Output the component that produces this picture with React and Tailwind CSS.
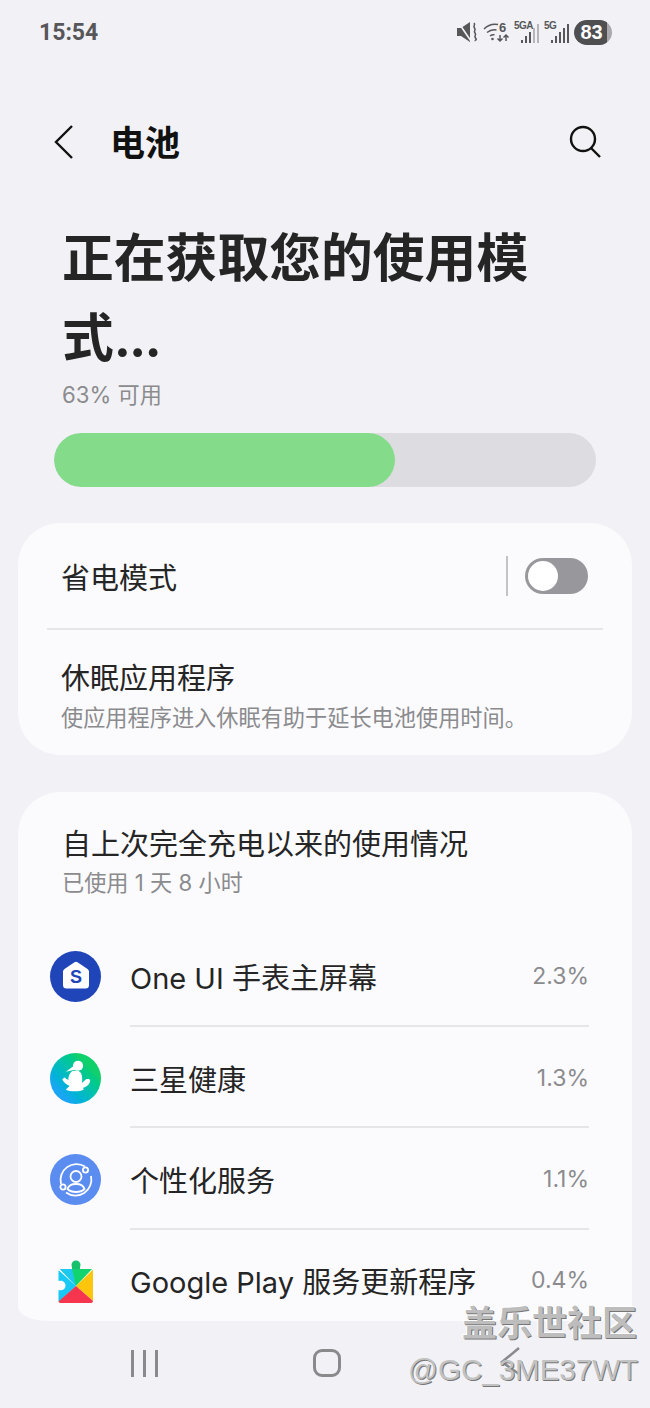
const FF = { fontFamily: 'Inter, "Noto Sans CJK SC", "Noto Sans", sans-serif' };

function StatusIcons() {
  return (
    <div className="flex items-center gap-[4px]">
      <svg width="22" height="24" viewBox="0 0 22 24" className="text-[#57575a]">
        <path d="M0 8h4l9-6v20l-9-6H0z" fill="currentColor" />
        <path d="M1 2l13 19" stroke="#f2f2f6" strokeWidth="1.600" />
        <path d="M17 3c2 2-1.500 3 .500 5s-1.500 3 .500 5-1.500 3 .500 5-1 2 0 3" stroke="currentColor" strokeWidth="1.600" fill="none" />
      </svg>
      <svg width="27" height="24" viewBox="0 0 27 24" fill="none" stroke="#57575a" strokeWidth="1.500">
        <path d="M1 9c4-4 9-5.500 14-4.500M4 12.500c3-2.500 6-3.200 9.500-2.500M7 16c1.500-1.200 3-1.500 4.500-1.200" />
        <circle cx="9.500" cy="19" r="1.300" fill="#57575a" stroke="none" />
        <path d="M17 21v-6M14.500 18.500l2.500 2.500 2.500-2.500M23 21v-6M20.500 17.500l2.500-2.500 2.500 2.500" />
        <text x="16" y="12" fontSize="13" fontWeight="700" fill="#57575a" stroke="none" style={{ fontFamily: '"Liberation Sans", sans-serif' }}>6</text>
      </svg>
      <div className="relative h-[24px] w-[26px]">
        <span className="absolute left-0 top-0 text-[10px] leading-[11px] font-bold tracking-[-0.5px] text-[#57575a]" style={{ fontFamily: '"Liberation Sans", sans-serif' }}>5GA</span>
        <div className="absolute bottom-[1px] left-[7px] flex items-end gap-[2px]">
          <span className="h-[3px] w-[2px] bg-[#57575a]" />
          <span className="h-[7px] w-[2px] bg-[#57575a]" />
          <span className="h-[11px] w-[2px] bg-[#57575a]" />
          <span className="h-[15px] w-[2px] bg-[#b5b5b9]" />
          <span className="h-[19px] w-[2px] bg-[#b5b5b9]" />
        </div>
      </div>
      <div className="relative h-[24px] w-[26px]">
        <span className="absolute left-0 top-0 text-[10px] leading-[11px] font-bold tracking-[-0.5px] text-[#57575a]" style={{ fontFamily: '"Liberation Sans", sans-serif' }}>5G</span>
        <div className="absolute bottom-[1px] left-[7px] flex items-end gap-[2px]">
          <span className="h-[3px] w-[2px] bg-[#57575a]" />
          <span className="h-[7px] w-[2px] bg-[#57575a]" />
          <span className="h-[11px] w-[2px] bg-[#57575a]" />
          <span className="h-[15px] w-[2px] bg-[#57575a]" />
          <span className="h-[19px] w-[2px] bg-[#57575a]" />
        </div>
      </div>
      <div className="relative flex h-[25px] w-[38px] items-center overflow-hidden rounded-full bg-[#a9a9ad]">
        <div className="flex h-full w-[33px] items-center justify-center rounded-l-full bg-[#4f4f52] pl-[2px] text-[20px] font-bold text-white" style={{ fontFamily: '"Liberation Sans", sans-serif' }}>83</div>
      </div>
    </div>
  );
}

function HomeIcon() {
  return (
    <div className="flex h-[51px] w-[51px] items-center justify-center rounded-full bg-[#1f45b8] pb-[3px]">
      <svg width="26" height="28" viewBox="0 0 26 28">
        <path d="M0 10.500Q0 9 1.500 8L11.500 1.200Q13 .300 14.500 1.200L24.500 8Q26 9 26 10.500V24a3.500 3.500 0 0 1-3.500 3.500H3.500A3.500 3.500 0 0 1 0 24z" fill="#fff" />
        <text x="13" y="22" textAnchor="middle" fontSize="18" fontWeight="800" fill="#1f45b8" style={{ fontFamily: '"Liberation Sans", sans-serif' }}>S</text>
      </svg>
    </div>
  );
}

function HealthIcon() {
  return (
    <div className="flex h-[51px] w-[51px] items-center justify-center rounded-full bg-gradient-to-tr from-[#1aa5f5] from-20% to-[#10d06c] to-75%">
      <svg width="51" height="51" viewBox="-25 -25 50 50" fill="#fff">
        <circle cx="2.500" cy="-12.500" r="5" />
        <path d="M-1.500-12.500-9.500-6.500-.500-8.500z" />
        <path d="M-3.500-7C0-8.500 4-8.500 5.500-5 7-2 6.500 1 6.500 4.500L10.500 .500 13.500 .500 14.500 2.500C13 7 10 8.500 7.500 9L8 11C3 13-5 13-9.500 11-8 9-6.500 8.500-6 7-9 6-11 4.500-13 1L-11-1-7 1.500C-7-2-6-5-3.500-7Z" />
      </svg>
    </div>
  );
}

function PersonIcon() {
  return (
    <div className="flex h-[51px] w-[51px] items-center justify-center rounded-full bg-[#5b8cf0]">
      <svg width="36" height="36" viewBox="0 0 36 36" fill="none" stroke="#fff" strokeWidth="1.800">
        <path d="M27 4.500A16 16 0 0 0 3 22" />
        <path d="M33 14A16 16 0 0 1 8 30.500" />
        <circle cx="27.500" cy="8" r="2.600" />
        <circle cx="5" cy="25" r="2.600" />
        <circle cx="18" cy="14.500" r="5.500" />
        <path d="M9.500 27c1-3.500 4.500-5 8.500-5s7.500 1.500 8.500 5c-2 2-5 3-8.500 3s-6.500-1-8.500-3z" />
      </svg>
    </div>
  );
}

function PlayIcon() {
  return (
    <div className="flex h-[51px] w-[51px] items-center justify-center">
      <svg width="36" height="44" viewBox="0 0 36 44">
        <circle cx="18" cy="6" r="4.500" fill="#15c26b" />
        <path d="M14 8h8v3h-8z" fill="#15c26b" />
        <path d="M2 10h32L18 27z" fill="#12d46f" />
        <path d="M2 10h12l4 17L2 10z" fill="#1cc8f0" />
        <path d="M1 11.500 18 27 1 43c-.500-.500-.500-1-.500-2V31c4 1 7-1 7-4.500S4 21 .500 22V12c0-.200.200-.300.500-.500z" fill="#18c9f5" />
        <path d="M34.500 11c.500 0 .500.500.500 1v30L18 27z" fill="#fdc60c" />
        <path d="M18 27 35 42c0 1-1 2-2 2H3c-1 0-2-.500-2.500-1.500z" fill="#f5364e" />
      </svg>
    </div>
  );
}

const apps = [
  { icon: <HomeIcon />, name: "One UI 手表主屏幕", pct: "2.3%" },
  { icon: <HealthIcon />, name: "三星健康", pct: "1.3%" },
  { icon: <PersonIcon />, name: "个性化服务", pct: "1.1%" },
  { icon: <PlayIcon />, name: "Google Play 服务更新程序", pct: "0.4%" },
];

export default function App() {
  return (
    <div className="relative flex h-[1408px] w-[650px] flex-col overflow-hidden bg-[#f2f2f6] text-[#252525]" style={FF}>
      {/* status bar */}
      <div className="flex h-[64px] items-center justify-between pl-[39px] pr-[38px]">
        <span className="pt-[2px] text-[23px] font-bold text-[#57575a]" style={{ fontFamily: 'Roboto, sans-serif' }}>15:54</span>
        <StatusIcons />
      </div>

      {/* header */}
      <div className="mt-[46px] flex h-[64px] items-center justify-between pl-[52px] pr-[48px]">
        <div className="flex items-center gap-[34px]">
          <svg width="24" height="36" viewBox="0 0 24 36" fill="none" stroke="#111" strokeWidth="2.400">
            <path d="M20 2 4 18l16 16" />
          </svg>
          <span className="pt-[2px] text-[35px] font-bold text-[#111]">电池</span>
        </div>
        <svg width="34" height="34" viewBox="0 0 34 34" fill="none" stroke="#111" strokeWidth="2.400">
          <circle cx="15" cy="14" r="12" />
          <path d="m23 23 9 9" />
        </svg>
      </div>

      {/* headline */}
      <h1 className="ml-[62px] mt-[44px] w-[500px] text-[51.800px] leading-[80px] font-bold text-[#252525]">正在获取您的使用模式<span className="tracking-[-2px]">...</span></h1>
      <p className="mt-[1px] pl-[62px] text-[22.200px] leading-[32px] text-[#8b8b8e]">63% 可用</p>

      {/* bar */}
      <div className="mx-[54px] mt-[22px] h-[54px] overflow-hidden rounded-full bg-[#dddde1]">
        <div className="h-full rounded-full bg-[#84dc8a]" style={{ width: "63%" }} />
      </div>

      {/* card 1 */}
      <div className="mx-[18px] mt-[36px] h-[232px] rounded-[42px] bg-[#fbfbfe]">
        <div className="flex h-[105px] items-center justify-between pl-[43px] pr-[44px]">
          <span className="pt-[6px] text-[29px] text-[#252525]">省电模式</span>
          <div className="flex items-center gap-[17px]">
            <span className="h-[40px] w-[2px] bg-[#c4c4c7]" />
            <div className="flex h-[36px] w-[63px] items-center rounded-full bg-[#98989c] pl-[3px]">
              <span className="h-[30px] w-[30px] rounded-full bg-white" />
            </div>
          </div>
        </div>
        <div className="mx-[29px] h-[2px] bg-[#e6e6e9]" />
        <div className="pl-[43px] pt-[29px]">
          <div className="text-[29px] leading-[40px] text-[#252525]">休眠应用程序</div>
          <div className="mt-[3px] text-[22.200px] leading-[32px] text-[#8b8b8e]">使应用程序进入休眠有助于延长电池使用时间。</div>
        </div>
      </div>

      {/* card 2 */}
      <div className="mx-[18px] mt-[37px] h-[529px] overflow-hidden rounded-t-[42px] rounded-b-[30px_14px] bg-[#fbfbfe]">
        <div className="pl-[44px] pt-[33px]">
          <div className="text-[29px] leading-[40px] text-[#252525]">自上次完全充电以来的使用情况</div>
          <div className="mt-[2px] text-[22.200px] leading-[32px] text-[#8b8b8e]">已使用 1 天 8 小时</div>
        </div>
        <div className="mt-[26px]">
          {apps.map((a, i) => (
            <div key={a.name} className="flex h-[101.500px] items-center pl-[32px] pr-[43px]">
              <div className="w-[80px] shrink-0 pt-[2px]">{a.icon}</div>
              <div className={`flex h-full flex-1 items-center justify-between pt-[8px] ${i < 3 ? "border-b-2 border-[#e6e6e9]" : "pb-[3px]"}`}>
                <span className="text-[29px] text-[#252525]">{a.name}</span>
                <span className="pb-[5px] text-[23px] text-[#8b8b8e]">{a.pct}</span>
              </div>
            </div>
          ))}
        </div>
      </div>

      {/* nav */}
      <div className="flex flex-1 items-center pl-[131px] pb-[3px]">
        <div className="flex gap-[9px]">
          <span className="h-[27px] w-[3px] bg-[#8a8a8d]" />
          <span className="h-[27px] w-[3px] bg-[#8a8a8d]" />
          <span className="h-[27px] w-[3px] bg-[#8a8a8d]" />
        </div>
        <span className="ml-[155px] h-[28px] w-[28px] rounded-[9px] border-[3px] border-[#8a8a8d]" />
      </div>

      {/* back chevron under watermark */}
      <svg width="30" height="30" viewBox="0 0 30 30" className="absolute left-[497px] top-[1345px]" fill="none" stroke="#8a8a8d" strokeWidth="2.500">
        <path d="M22 3 5 17l17 12" />
      </svg>

      {/* watermark */}
      <div className="absolute right-[13px] top-[1300px] text-[35px] leading-[46px] font-bold text-[#bdbdbd]" style={{ textShadow: "1px 1px 0 #777, -1px -1px 0 #fff" }}>盖乐世社区</div>
      <div className="absolute right-[12px] top-[1350px] text-[29.500px] leading-[40px] text-[#c2c2c2]" style={{ fontFamily: '"Liberation Sans", sans-serif', textShadow: "1px 1px 0 #777" }}>@GC_3ME37WT</div>
    </div>
  );
}
